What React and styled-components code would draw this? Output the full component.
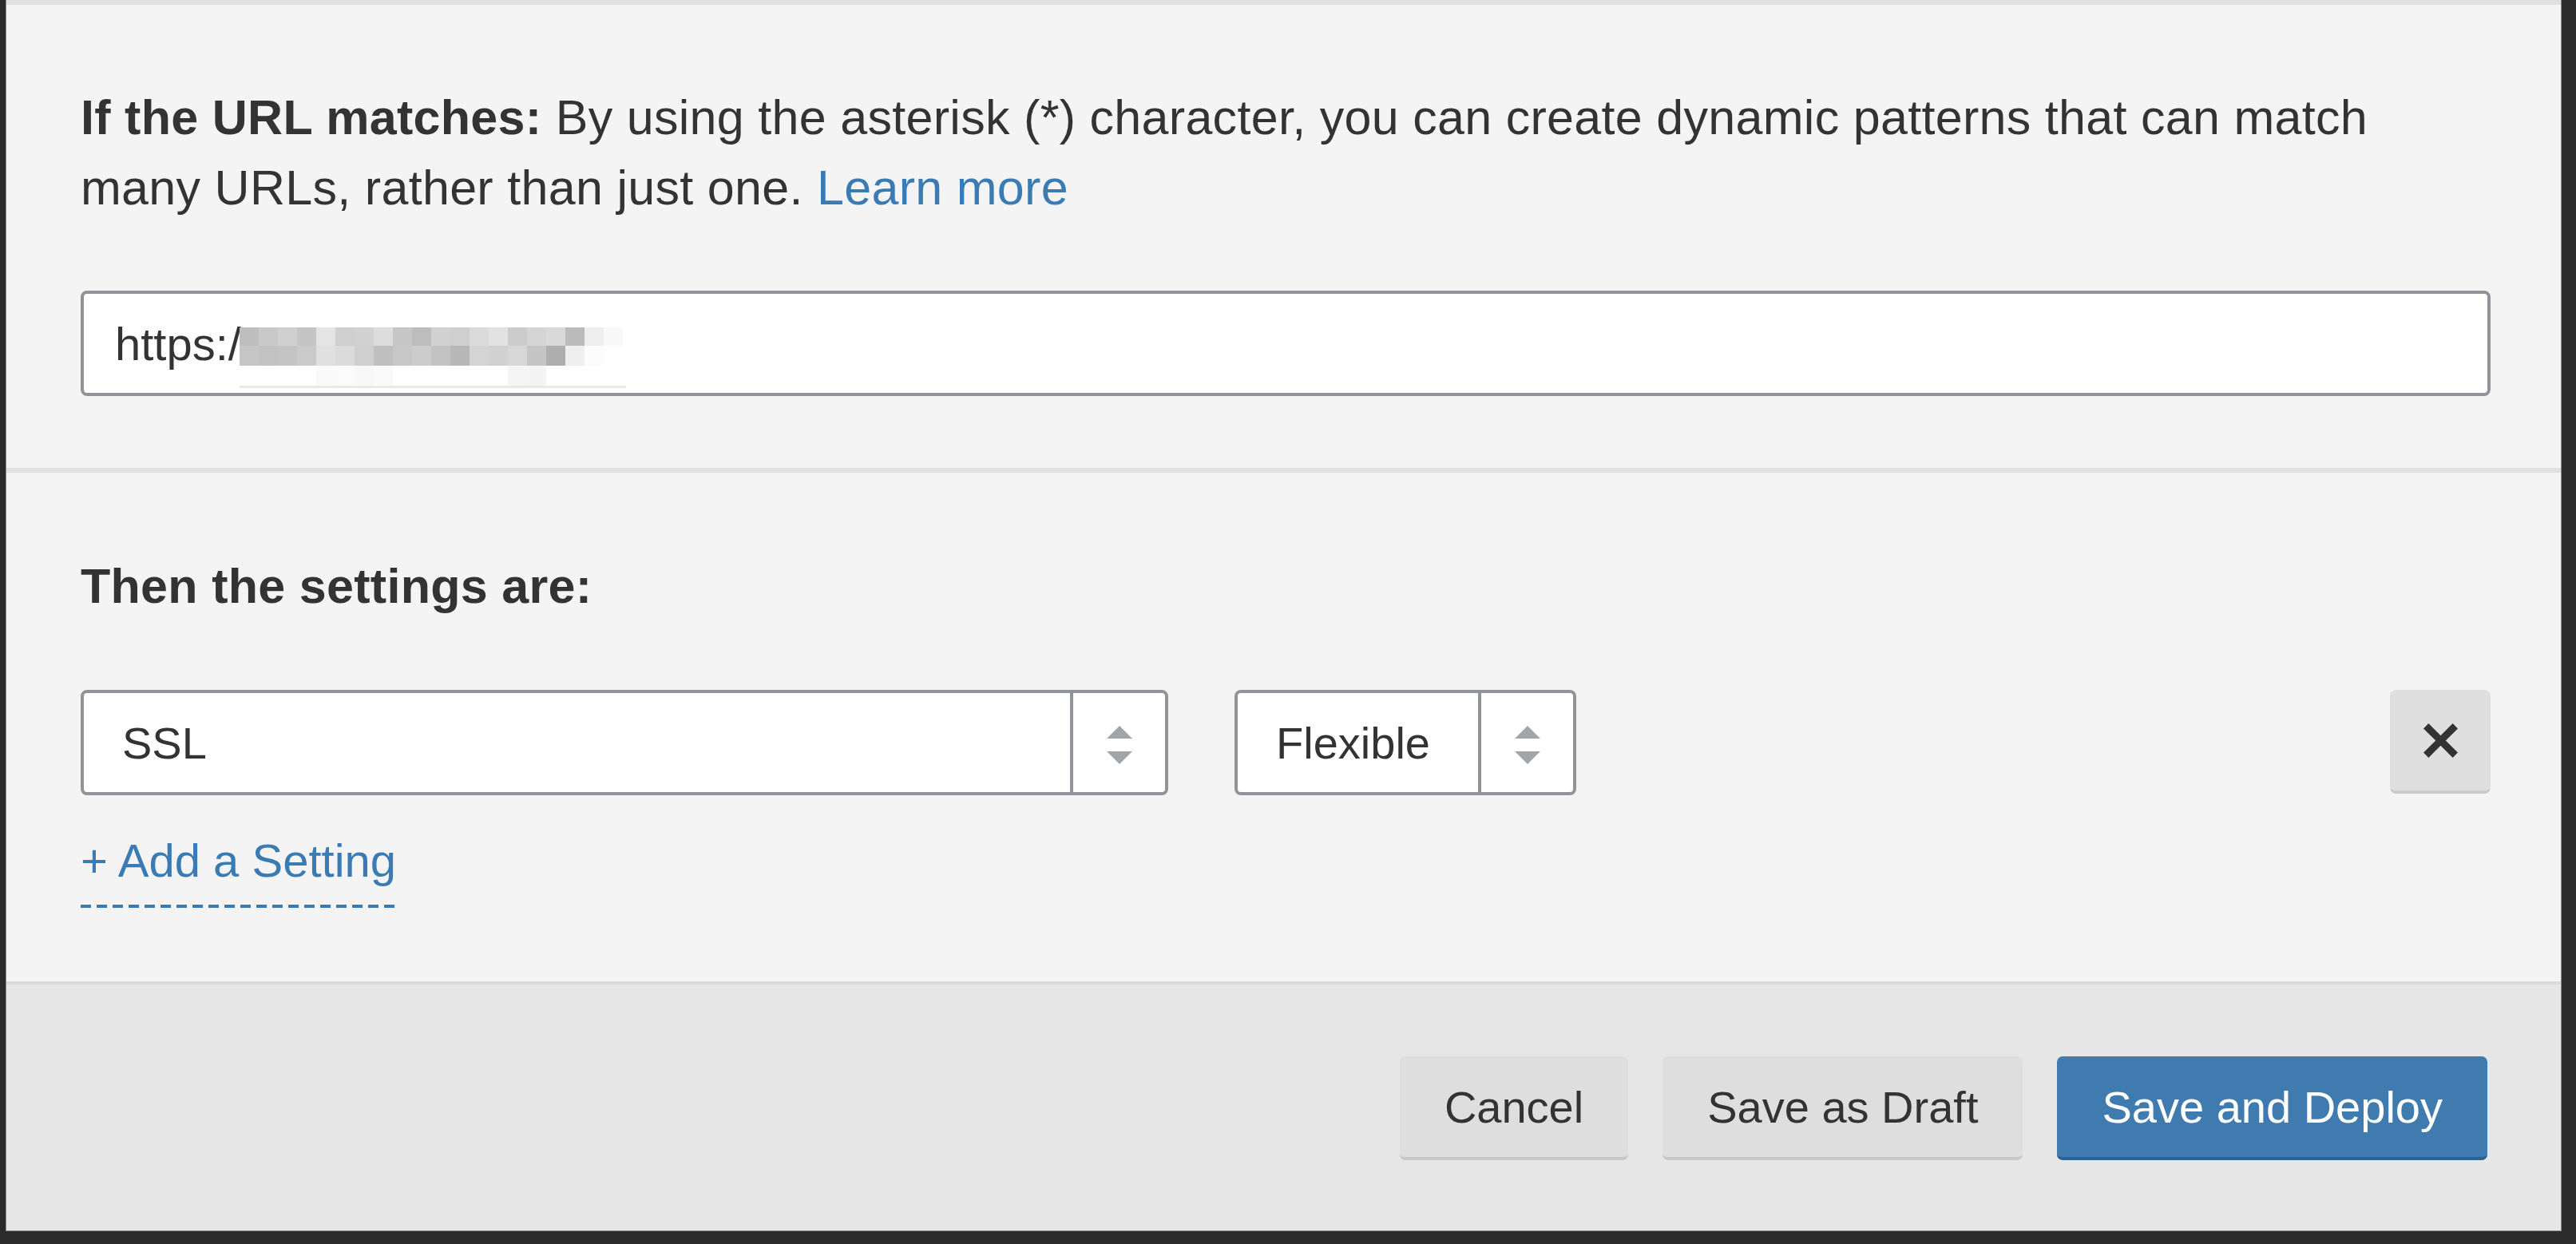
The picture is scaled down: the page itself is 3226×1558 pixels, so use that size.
import styled, { createGlobalStyle } from "styled-components";

const GlobalStyle = createGlobalStyle`
  html, body {
    margin: 0;
    padding: 0;
    background: #2b2b2b;
  }
  body {
    font-family: "Liberation Sans", Arial, sans-serif;
    color: #333;
  }
  * {
    box-sizing: border-box;
  }
`;

// pixelated (redacted) part of the url
const redacted = [
  [0xbe, 0xc9, 0xd0, 0xc5, 0xe4, 0xcf, 0xd2, 0xdd, 0xc6, 0xbd, 0xd2, 0xcf, 0xdb, 0xe2, 0xcc, 0xd5, 0xd9, 0xbb, 0xee, 0xf9],
  [0xc6, 0xc2, 0xc4, 0xca, 0xe0, 0xdb, 0xcf, 0xc0, 0xc7, 0xcc, 0xc3, 0xb8, 0xd4, 0xd1, 0xd7, 0xc5, 0xae, 0xef, 0xfc, 0xff],
  [0xff, 0xff, 0xff, 0xff, 0xfa, 0xfb, 0xf8, 0xfa, 0xff, 0xff, 0xff, 0xff, 0xff, 0xff, 0xf5, 0xf4, 0xff, 0xff, 0xff, 0xff],
];
const rowHeights = [23, 25, 25];

const App = () => {
  let y = 0;
  const rows = redacted.map((row, r) => {
    const top = y;
    y += rowHeights[r];
    return row.map((v, c) => (
      <rect
        key={`${r}-${c}`}
        x={c * 24}
        y={top}
        width="24"
        height={rowHeights[r]}
        fill={`rgb(${v},${v},${v})`}
      />
    ));
  });

  return (
    <>
      <GlobalStyle />
      <Page>
        <Modal>
          <Section $top={97} $bottom={90}>
            <Lead>
              <strong>If the URL matches:</strong> By using the asterisk (*)
              character, you can create dynamic patterns that can match many
              URLs, rather than just one. <Link href="#">Learn more</Link>
            </Lead>
            <UrlField>
              <UrlText>https:/</UrlText>
              <Redacted width="484" height="76" viewBox="0 0 484 76">
                {rows}
                <rect x="0" y="73" width="484" height="3" fill="#e9e9e9" />
              </Redacted>
            </UrlField>
          </Section>

          <Section $top={98} $bottom={92}>
            <Heading>Then the settings are:</Heading>
            <SettingRow>
              <Select $width={1362}>
                <SelectValue>SSL</SelectValue>
                <SelectArrows>
                  <ArrowIcon />
                </SelectArrows>
              </Select>
              <Select $width={428}>
                <SelectValue>Flexible</SelectValue>
                <SelectArrows>
                  <ArrowIcon />
                </SelectArrows>
              </Select>
              <RemoveButton aria-label="Remove setting">
                <svg width="43" height="43" viewBox="0 0 43 43">
                  <path
                    d="M3.2 3.2 L39.8 39.8 M39.8 3.2 L3.2 39.8"
                    stroke="#333"
                    strokeWidth="9"
                    fill="none"
                  />
                </svg>
              </RemoveButton>
            </SettingRow>
            <AddLink href="#">+ Add a Setting</AddLink>
          </Section>

          <Footer>
            <Button>Cancel</Button>
            <Button>Save as Draft</Button>
            <Button $primary>Save and Deploy</Button>
          </Footer>
        </Modal>
      </Page>
    </>
  );
};

const ArrowIcon = () => (
  <ArrowSvg width="32" height="48" viewBox="0 0 32 48">
    <polygon points="16,0 32,16 0,16" fill="#a2a5a8" />
    <polygon points="0,32 32,32 16,48" fill="#a2a5a8" />
  </ArrowSvg>
);

export default App;

const Page = styled.div`
  width: 3226px;
  height: 1558px;
  padding-left: 7px;
  overflow: hidden;
`;

const Modal = styled.div`
  width: 3201px;
  background: #f4f4f4;
  border: 1px solid #8c8c8c;
  border-top: none;
`;

const Section = styled.section`
  padding: ${(p) => p.$top}px 88px ${(p) => p.$bottom}px 93px;
  border-top: 6px solid #e0e0e0;
`;

const Lead = styled.p`
  margin: 0;
  max-width: 2960px;
  font-size: 61px;
  line-height: 88px;
  letter-spacing: 0.3px;

  strong {
    font-weight: 700;
  }
`;

const Heading = styled.h3`
  margin: 0;
  font-size: 61px;
  line-height: 88px;
  letter-spacing: 0.3px;
  font-weight: 700;
`;

const Link = styled.a`
  color: #3b7bb4;
  text-decoration: none;
`;

const UrlField = styled.div`
  margin-top: 85px;
  height: 132px;
  display: flex;
  align-items: center;
  padding: 0 39px;
  background: #fff;
  border: 4px solid #909499;
  border-radius: 8px;
  font-size: 58px;
`;

const UrlText = styled.span`
  color: #333;
`;

const Redacted = styled.svg`
  display: block;
  margin-left: -2px;
  margin-top: 36px;
`;

const SettingRow = styled.div`
  margin-top: 86px;
  display: flex;
  align-items: flex-start;
  gap: 83px;
`;

const Select = styled.div`
  width: ${(p) => p.$width}px;
  height: 132px;
  display: flex;
  background: #fff;
  border: 4px solid #909499;
  border-radius: 8px;
`;

const SelectValue = styled.div`
  flex: 1;
  display: flex;
  align-items: center;
  padding-left: 48px;
  font-size: 56px;
  color: #333;
`;

const SelectArrows = styled.div`
  width: 119px;
  border-left: 4px solid #909499;
  display: flex;
  align-items: center;
  justify-content: center;
`;

const ArrowSvg = styled.svg`
  display: block;
  margin-top: 6px;
`;

const RemoveButton = styled.button`
  margin-left: auto;
  width: 126px;
  height: 130px;
  padding: 0;
  border: none;
  border-bottom: 4px solid #cbcbcb;
  border-radius: 8px;
  background: #dfdfdf;
  display: flex;
  align-items: center;
  justify-content: center;
  cursor: pointer;
`;

const AddLink = styled.a`
  display: block;
  width: fit-content;
  margin-top: 38px;
  padding-bottom: 15px;
  font-size: 58px;
  line-height: 88px;
  color: #3b7bb4;
  text-decoration: none;
  background-image: repeating-linear-gradient(
    to right,
    #3b7bb4 0 13px,
    transparent 13px 20px
  );
  background-size: 100% 4px;
  background-position: left bottom;
  background-repeat: no-repeat;
`;

const Footer = styled.footer`
  border-top: 4px solid #dadada;
  background: #e6e6e6;
  padding: 90px 92px 88px 0;
  display: flex;
  justify-content: flex-end;
  gap: 43px;
`;

const Button = styled.button`
  height: 130px;
  padding: 0 56px;
  border: none;
  border-bottom: 4px solid ${(p) => (p.$primary ? "#2f6392" : "#c8c8c8")};
  border-radius: 7px;
  background: ${(p) => (p.$primary ? "#3f7bae" : "#dedede")};
  color: ${(p) => (p.$primary ? "#fff" : "#333")};
  font-family: "Liberation Sans", Arial, sans-serif;
  font-size: 56px;
  cursor: pointer;
`;
